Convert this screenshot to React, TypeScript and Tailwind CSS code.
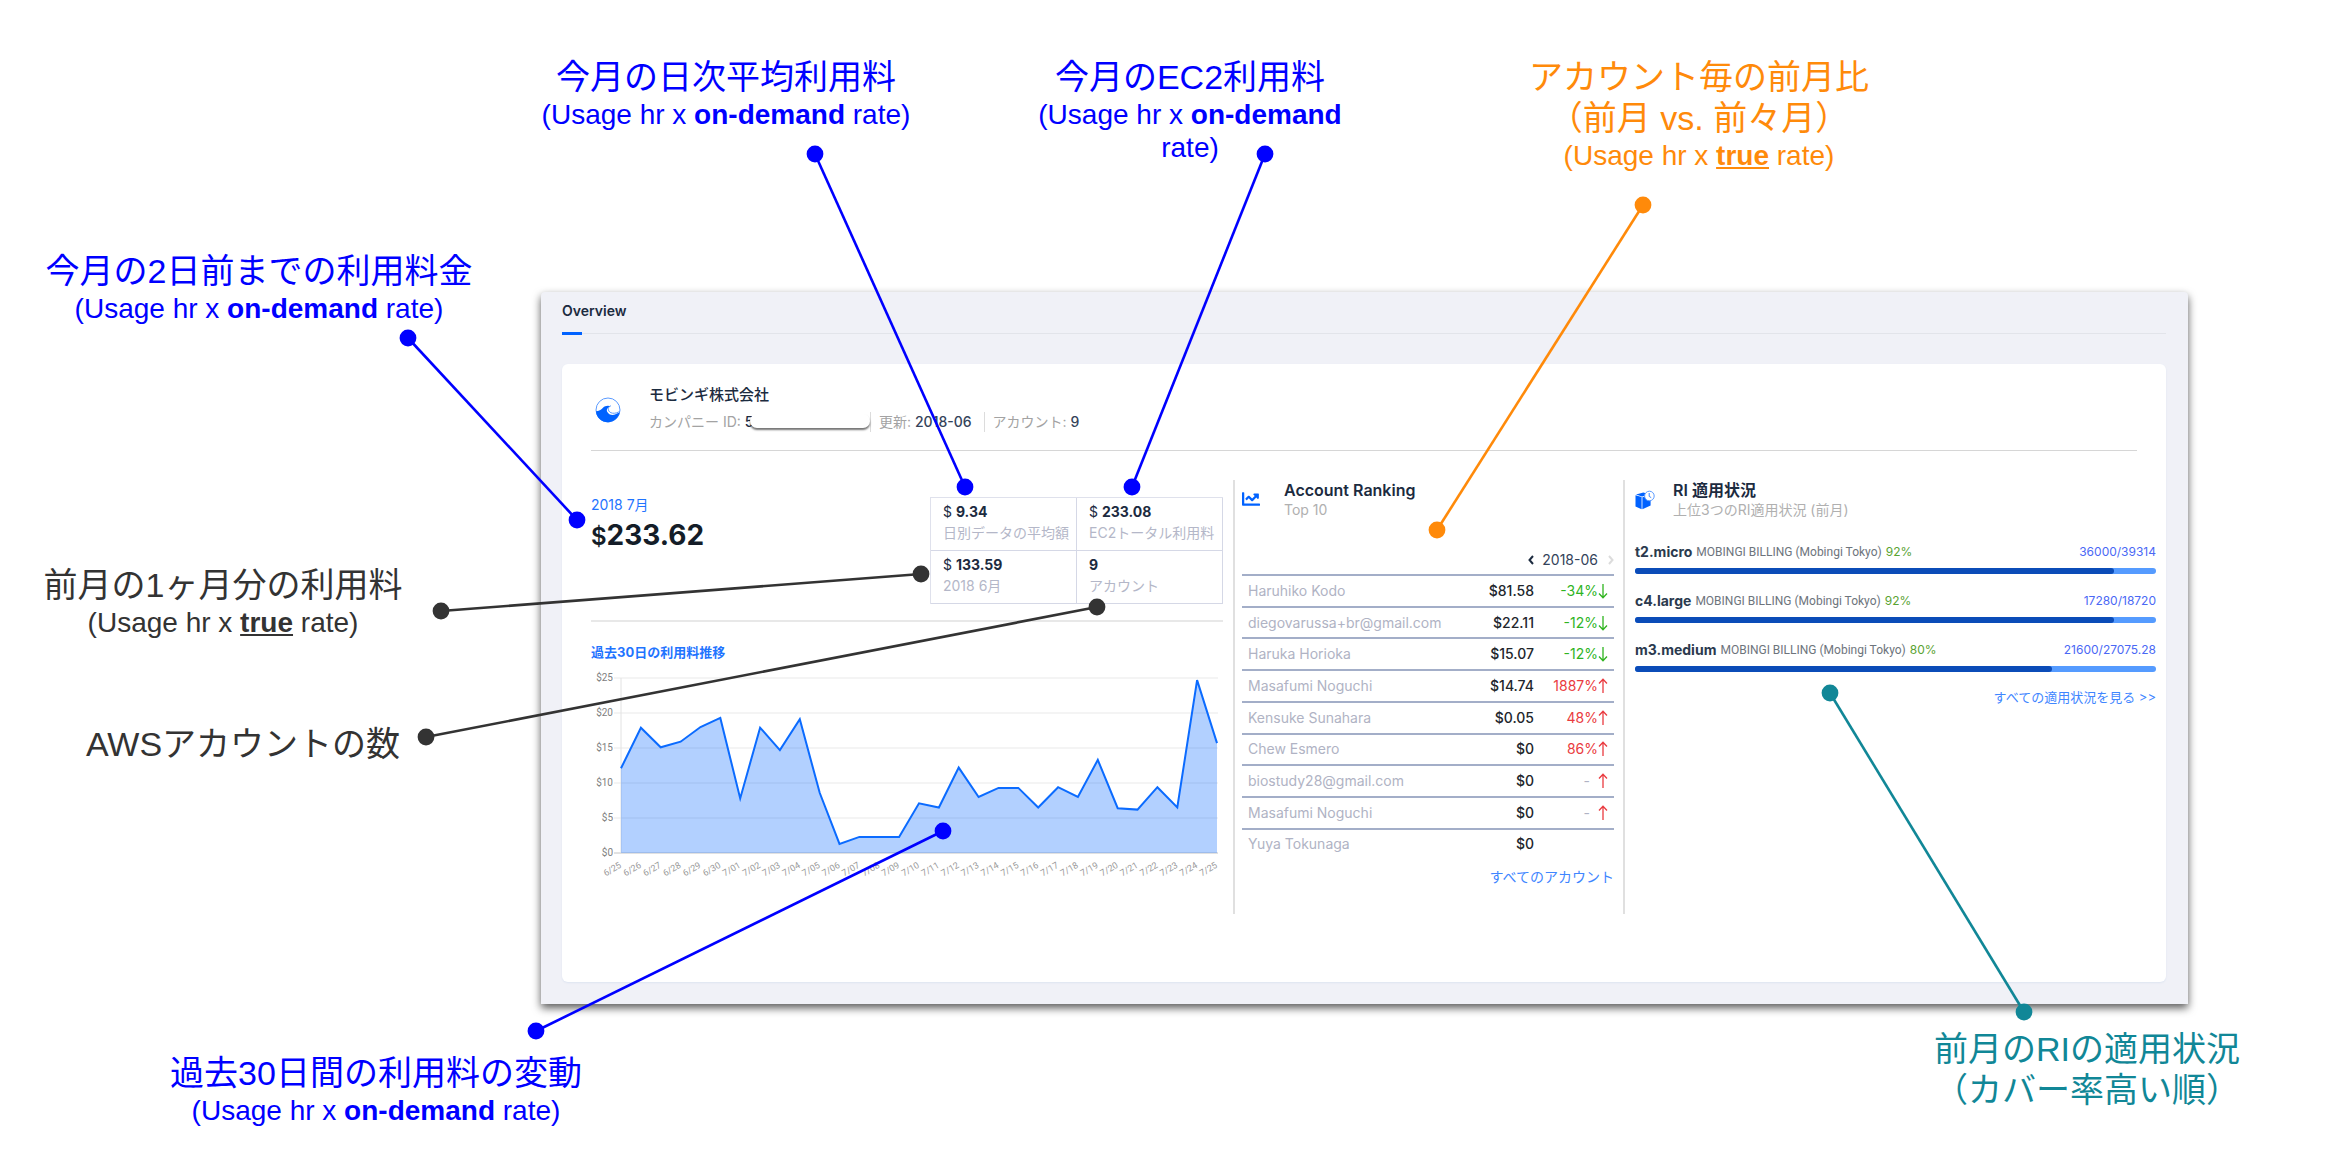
import React from "react";
import { FaChartLine } from "react-icons/fa";

type Ranking = { name: string; amount: string; change?: string; trend?: "up" | "down" };

const rankings: Ranking[] = [
  { name: "Haruhiko Kodo", amount: "$81.58", change: "-34%", trend: "down" },
  { name: "diegovarussa+br@gmail.com", amount: "$22.11", change: "-12%", trend: "down" },
  { name: "Haruka Horioka", amount: "$15.07", change: "-12%", trend: "down" },
  { name: "Masafumi Noguchi", amount: "$14.74", change: "1887%", trend: "up" },
  { name: "Kensuke Sunahara", amount: "$0.05", change: "48%", trend: "up" },
  { name: "Chew Esmero", amount: "$0", change: "86%", trend: "up" },
  { name: "biostudy28@gmail.com", amount: "$0", trend: "up" },
  { name: "Masafumi Noguchi", amount: "$0", trend: "up" },
  { name: "Yuya Tokunaga", amount: "$0" },
];

const reserved = [
  { type: "t2.micro", pct: 92, usage: "36000/39314" },
  { type: "c4.large", pct: 92, usage: "17280/18720" },
  { type: "m3.medium", pct: 80, usage: "21600/27075.28" },
];

const stats = [
  { value: "9.34", money: true, label: "日別データの平均額" },
  { value: "233.08", money: true, label: "EC2トータル利用料" },
  { value: "133.59", money: true, label: "2018 6月" },
  { value: "9", money: false, label: "アカウント" },
];

const days: [string, number][] = [
  ["6/25", 12.1], ["6/26", 17.9], ["6/27", 15.1], ["6/28", 15.9], ["6/29", 18], ["6/30", 19.3],
  ["7/01", 7.8], ["7/02", 17.9], ["7/03", 14.7], ["7/04", 19.1], ["7/05", 8.6], ["7/06", 1.3],
  ["7/07", 2.3], ["7/08", 2.3], ["7/09", 2.3], ["7/10", 7.1], ["7/11", 6.5], ["7/12", 12.2],
  ["7/13", 8], ["7/14", 9.3], ["7/15", 9.3], ["7/16", 6.5], ["7/17", 9.4], ["7/18", 8],
  ["7/19", 13.3], ["7/20", 6.4], ["7/21", 6.2], ["7/22", 9.4], ["7/23", 6.5], ["7/24", 24.7],
  ["7/25", 15.7],
];

function UsageChart() {
  const x = (i: number) => 30 + (i * 596) / 30;
  const y = (v: number) => 185 - v * 7;
  const line = days.map(([, v], i) => `${x(i).toFixed(1)},${y(v).toFixed(1)}`).join(" ");
  return (
    <svg viewBox="0 0 632 220" className="mt-1.5 block w-full" role="img" aria-label="過去30日の利用料推移">
      {[0, 5, 10, 15, 20, 25].map((v) => (
        <g key={v}>
          <line x1="23" x2="627" y1={y(v)} y2={y(v)} stroke={v === 0 ? "#c4c4c4" : "#e9e9e9"} strokeWidth="1" />
          <text x="22" y={y(v) + 3} textAnchor="end" fontSize="10" fill="#808080" className="font-['Roboto',sans-serif]">
            ${v}
          </text>
        </g>
      ))}
      <line x1="30" x2="30" y1="10" y2="185" stroke="#e2e2e2" />
      <polygon points={`30,185 ${line} 626,185`} fill="#0062ff" fillOpacity="0.3" />
      <polyline points={line} fill="none" stroke="#0b6bff" strokeWidth="2" />
      {days.map(([d], i) => (
        <text
          key={d}
          transform={`translate(${x(i) + 1} 199) rotate(-30)`}
          textAnchor="end"
          fontSize="9"
          fill="#999999"
          className="font-['Roboto',sans-serif]"
        >
          {d}
        </text>
      ))}
    </svg>
  );
}

function WaveLogo() {
  return (
    <svg viewBox="0 0 26 26" className="size-[26px]" aria-hidden="true">
      <circle cx="13" cy="13" r="12" fill="#fff" stroke="#5b9bff" strokeWidth="1" />
      <path
        d="M1 14.2C4.6 14.4 6.2 12.6 8 10.8C10 8.9 12.8 8.3 16 9.4C12.6 10.2 11.2 12.4 12.2 14.7C13.6 18 18.6 19 22 16.6L24.6 15.6C23.4 21 18.8 25.2 13 25.2C6.6 25.2 1.2 20.4 1 14.2Z"
        fill="#0062ff"
      />
      <path d="M15.6 8.6C12 10.6 12.6 15.4 17.6 16.2C20.4 16.6 23 15.4 24.6 14.4" fill="none" stroke="#5b9bff" strokeWidth="1" />
    </svg>
  );
}

function ReservedIcon() {
  return (
    <svg viewBox="0 0 20 20" className="size-[20px]" aria-hidden="true">
      <path d="M0.5 5.2L6.6 7V19.2L0.5 16.4Z" fill="#0062ff" />
      <path d="M7.4 7.2L15.6 5.6V15.6L7.4 19.2Z" fill="#0062ff" />
      <path d="M1 4.4L8.4 2.4L15 4.6L7 6.4Z" fill="#0062ff" />
      <circle cx="14.4" cy="6" r="4.8" fill="#fff" stroke="#5b9bff" strokeWidth="1" />
      <path d="M14.2 3V6.4L16.2 7.6" fill="none" stroke="#3b86ff" strokeWidth="1" />
    </svg>
  );
}

function TrendArrow({ trend }: { trend: "up" | "down" }) {
  return (
    <svg viewBox="0 0 10 16" className="h-4 w-2.5" fill="none" stroke="currentColor" strokeWidth="1.3" aria-label={trend}>
      {trend === "up" ? <path d="M5 15V1.5M1 5.5L5 1.2L9 5.5" /> : <path d="M5 1V14.5M1 10.5L5 14.8L9 10.5" />}
    </svg>
  );
}

function SectionHeader({ icon, title, sub, gap }: { icon: React.ReactNode; title: string; sub: string; gap: string }) {
  return (
    <header className={`flex items-start ${gap}`}>
      <span className="mt-2.5 shrink-0 text-[#0062ff]">{icon}</span>
      <div>
        <h2 className="text-[16px] leading-5 font-semibold text-[#1c2b3f]">{title}</h2>
        <p className="text-[14px] leading-5 text-[#b0b0b0]">{sub}</p>
      </div>
    </header>
  );
}

function Dashboard() {
  return (
    <section className="relative mr-[158px] ml-[23.06%] rounded-t-sm bg-[#f0f1f7] pr-[22px] pb-[22px] pl-[21px] font-['Inter','Noto_Sans_CJK_JP',sans-serif] shadow-[0_4px_9px_rgba(0,0,0,0.65)]">
      <nav className="flex h-[42px] border-b border-[#e2e4ea]">
        <button type="button" className="relative h-9 text-[14px] font-semibold text-[#1c2b3f]">
          Overview
          <span className="absolute top-10 left-0 h-[3px] w-5 bg-[#0062ff]" />
        </button>
      </nav>

      <div className="mt-[30px] rounded-md bg-white pr-2.5 pb-[68px] pl-[29px] shadow-[0_1px_2px_#dde4f0]">
        <header className="mr-[19px] flex h-[87px] items-start border-b border-[#d6d6d6]">
          <div className="mt-[33px] ml-1 shrink-0">
            <WaveLogo />
          </div>
          <div className="mt-5 ml-7">
            <h1 className="text-[15px] leading-[22px] font-medium text-[#1c2b3f]">モビンギ株式会社</h1>
            <ul className="mt-1 flex items-center text-[14px] leading-6 text-[#a3a3a3]">
              <li className="relative w-[221px] whitespace-nowrap">
                カンパニー ID: <span className="font-medium text-[#1c2b3f]">5</span>
                <span className="absolute top-1 right-0 h-[14px] w-[120px] rounded-full bg-white shadow-[0_2px_2px_rgba(0,0,0,0.55)]" />
              </li>
              <li className="border-x border-[#dcdcdc] pr-3 pl-2 leading-5">
                更新: <span className="font-medium text-[#34435a]">2018-06</span>
              </li>
              <li className="pl-2">
                アカウント: <span className="font-medium text-[#34435a]">9</span>
              </li>
            </ul>
          </div>
        </header>

        <div className="mt-[29px] grid grid-cols-[642fr_390fr_533fr]">
          <section className="min-w-0 pr-2.5">
            <div className="flex items-start justify-between border-b-2 border-[#e8e8e8] pt-[15px] pb-4">
              <div>
                <p className="text-[14px] leading-5 text-[#1f74ff]">2018 7月</p>
                <p className="mt-1 text-[28px] leading-8 font-bold text-[#141d28]">
                  <span className="text-[24px] font-semibold">$</span>233.62
                </p>
              </div>
              <dl className="mt-0.5 grid grid-cols-2 border-t border-l border-[#dfe1ec]">
                {stats.map((s) => (
                  <div key={s.label} className="flex h-[53px] w-[146px] flex-col-reverse justify-end border-r border-b border-[#d5d8e6] pt-1 pl-3 whitespace-nowrap">
                    <dt className="text-[14px] leading-[22px] text-[#b4b7c8]">{s.label}</dt>
                    <dd className="text-[14px] leading-5 font-bold text-[#1c2b3f]">
                      {s.money && <span className="font-normal">$ </span>}
                      {s.value}
                    </dd>
                  </div>
                ))}
              </dl>
            </div>
            <h2 className="mt-5 text-[13px] leading-5 font-bold text-[#1f74ff]">過去30日の利用料推移</h2>
            <UsageChart />
          </section>

          <section className="min-h-[434px] border-l-2 border-[#e0e0e0] pr-[9px] pl-[7px]">
            <SectionHeader icon={<FaChartLine className="size-[18px]" />} title="Account Ranking" sub="Top 10" gap="gap-6" />
            <div className="mt-[30px] flex items-center justify-end text-[14px] leading-5 text-[#34435a]">
              <button type="button" aria-label="前の月" className="px-2">
                <svg viewBox="0 0 6 10" className="h-2.5 w-1.5" fill="none" stroke="#1c2b3f" strokeWidth="2"><path d="M5 1L1.5 5L5 9" /></svg>
              </button>
              <span>2018-06</span>
              <button type="button" aria-label="次の月" className="pl-2.5">
                <svg viewBox="0 0 6 10" className="h-2.5 w-1.5" fill="none" stroke="#dcdcdc" strokeWidth="2"><path d="M1 1L4.5 5L1 9" /></svg>
              </button>
            </div>
            <table className="mt-1 h-[285px] w-full text-[14px] leading-5">
              <tbody>
                {rankings.map((r, i) => (
                  <tr key={i} className="border-t-2 border-[#a3aec8]">
                    <th scope="row" className="pl-1.5 text-left font-normal text-[#b0b3c4]">{r.name}</th>
                    <td className="text-right font-medium text-[#22262c]">{r.amount}</td>
                    <td className="w-20 pr-1.5">
                      {r.trend && (
                        <span className={`flex items-center justify-end ${r.trend === "up" ? "text-[#ea3b40]" : "text-[#2fb41f]"}`}>
                          {r.change ?? <span className="mr-2 text-[#b0b3c4]">-</span>}
                          <TrendArrow trend={r.trend} />
                        </span>
                      )}
                    </td>
                  </tr>
                ))}
              </tbody>
            </table>
            <p className="mt-2 text-right text-[14px] leading-5">
              <a href="#accounts" className="text-[#3f86ff]">すべてのアカウント</a>
            </p>
          </section>

          <section className="min-w-0 border-l-2 border-[#e0e0e0] pl-2.5">
            <SectionHeader icon={<ReservedIcon />} title="RI 適用状況" sub="上位3つのRI適用状況 (前月)" gap="gap-[18px]" />
            <ul className="mt-6 flex flex-col gap-[19px] text-[12px] leading-4">
              {reserved.map((r) => (
                <li key={r.type}>
                  <div className="flex h-4 items-center whitespace-nowrap">
                    <span className="text-[14px] font-bold text-[#2b3a4e]">{r.type}</span>
                    <span className="ml-1 font-['Roboto',sans-serif] text-[#6d747c]">MOBINGI BILLING (Mobingi Tokyo)</span>
                    <span className="ml-1 text-[#5aa332]">{r.pct}%</span>
                    <span className="ml-auto text-[#4a68f5]">{r.usage}</span>
                  </div>
                  <div role="progressbar" aria-label={r.type} aria-valuenow={r.pct} className="mt-2 h-1.5 rounded-full bg-[#559bff]">
                    <div className="h-full rounded-full bg-[#0b4cb8]" style={{ width: `${r.pct}%` }} />
                  </div>
                </li>
              ))}
            </ul>
            <p className="mt-[15px] text-right text-[13px] leading-5">
              <a href="#reserved" className="text-[#3f86ff]">すべての適用状況を見る &gt;&gt;</a>
            </p>
          </section>
        </div>
      </div>
    </section>
  );
}

const BLUE = "#0000ff";
const DARK = "#333333";
const ORANGE = "#ff8a0a";
const TEAL = "#118797";

const PAGE_W = 2346;
const pct = (x: number) => `${((x / PAGE_W) * 100).toFixed(3)}%`;

const connectors = [
  { color: BLUE, from: [815, 154], to: [965, 487] },
  { color: BLUE, from: [1265, 154], to: [1132, 487] },
  { color: BLUE, from: [408, 338], to: [577, 520] },
  { color: DARK, from: [441, 611], to: [921, 574] },
  { color: DARK, from: [426, 737], to: [1097, 607] },
  { color: BLUE, from: [536, 1031], to: [943, 831] },
  { color: ORANGE, from: [1643, 205], to: [1437, 530] },
  { color: TEAL, from: [1830, 693], to: [2024, 1012] },
];

function Connectors() {
  return (
    <svg className="pointer-events-none absolute inset-0 h-full w-full" aria-hidden="true">
      {connectors.map(({ color, from, to }) => (
        <g key={`${from}`} fill={color} stroke={color}>
          <line x1={pct(from[0])} y1={from[1]} x2={pct(to[0])} y2={to[1]} strokeWidth="2.6" />
          <circle cx={pct(from[0])} cy={from[1]} r="8.4" stroke="none" />
          <circle cx={pct(to[0])} cy={to[1]} r="8.4" stroke="none" />
        </g>
      ))}
    </svg>
  );
}

function Note({ x, y, color, lines, rate, width }: { x: number; y: number; color: string; lines: string[]; rate?: "on-demand" | "true"; width?: number }) {
  return (
    <div
      className="absolute w-max -translate-x-1/2 text-center font-['Liberation_Sans','Noto_Sans_CJK_JP',sans-serif]"
      style={{ left: pct(x), top: y, color, maxWidth: width }}
    >
      {lines.map((l) => (
        <p key={l} className="text-[34px] leading-[41px] whitespace-nowrap">{l}</p>
      ))}
      {rate && (
        <p className="text-[28px] leading-[33px]">
          (Usage hr x <b className={rate === "true" ? "underline" : ""}>{rate}</b> rate)
        </p>
      )}
    </div>
  );
}

export default function App() {
  return (
    <main lang="ja" className="relative min-h-screen overflow-hidden bg-white pt-[292px] pb-[154px]">
      <Dashboard />
      <Connectors />
      <Note x={726} y={57} color={BLUE} lines={["今月の日次平均利用料"]} rate="on-demand" />
      <Note x={1190} y={57} color={BLUE} lines={["今月のEC2利用料"]} rate="on-demand" width={340} />
      <Note x={1699} y={57} color={ORANGE} lines={["アカウント毎の前月比", "（前月 vs. 前々月）"]} rate="true" />
      <Note x={259} y={251} color={BLUE} lines={["今月の2日前までの利用料金"]} rate="on-demand" />
      <Note x={223} y={565} color={DARK} lines={["前月の1ヶ月分の利用料"]} rate="true" />
      <Note x={243} y={724} color={DARK} lines={["AWSアカウントの数"]} />
      <Note x={376} y={1053} color={BLUE} lines={["過去30日間の利用料の変動"]} rate="on-demand" />
      <Note x={2087} y={1029} color={TEAL} lines={["前月のRIの適用状況", "（カバー率高い順）"]} />
    </main>
  );
}
